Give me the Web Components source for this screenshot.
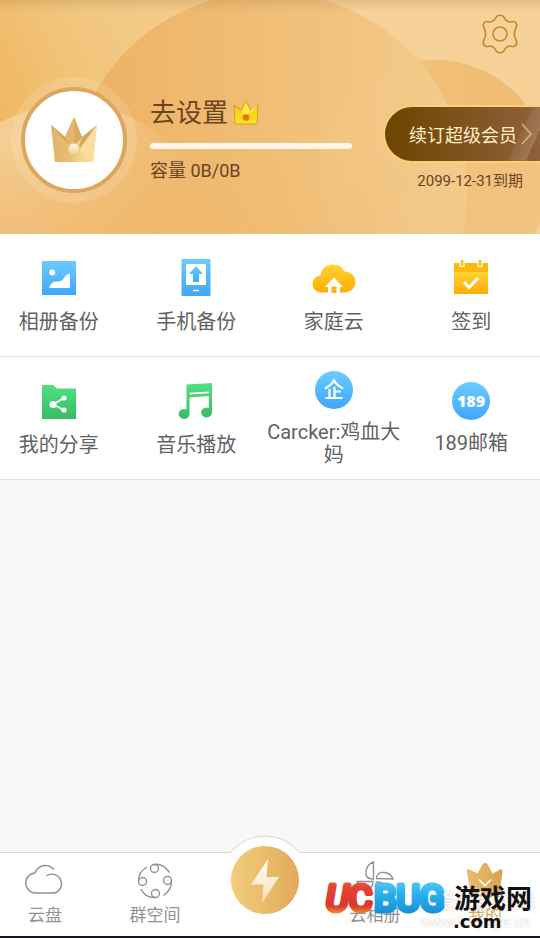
<!DOCTYPE html>
<html lang="zh-CN">
<head>
<meta charset="utf-8">
<meta name="viewport" content="width=device-width, initial-scale=1">
<title>我的</title>
<style>
html,body{margin:0;background:#f8f8f8}
body{font-family:Roboto,"Noto Sans CJK SC",sans-serif;color:#5f6265}
</style>
</head>
<body>
<my-page></my-page>
<script>
const ICONS = {
gear:[36,40,`<g fill="none" stroke="#c4862e" stroke-width="1.6" stroke-linejoin="round"><path d="M15 2.2Q18 .2 21 2.2C22.600 3.200 22.800 7.600 28 8Q32.600 6.600 33.600 8.600C37.200 12.500 32.400 13.500 32.400 20S37.200 27.500 33.600 31.400Q32.600 33.400 28 32C22.800 32.400 22.600 36.800 21 37.800Q18 39.800 15 37.800C13.400 36.800 13.200 32.400 8 32Q3.400 33.400 2.400 31.400C-1.200 27.500 3.600 26.500 3.600 20S-1.200 12.500 2.400 8.600Q3.400 6.600 8 8C13.200 7.600 13.400 3.200 15 2.200Z"/><circle cx="18" cy="20" r="7"/></g>`],
crown:[46,46,`<defs><linearGradient id="a" x1="0" y1=".5" x2="1" y2=".5"><stop stop-color="#e2b366"/><stop offset="1" stop-color="#ffe3a3"/></linearGradient><linearGradient id="c" x2="0" y2="1"><stop stop-color="#fff7e8"/><stop offset="1" stop-color="#f3ce8d"/></linearGradient></defs><path d="M0 8L14 20 23 0 31 20 46 8 42 45H4Z" fill="url(#a)"/><path d="M0 8L14 20 23 45H4Z" fill="#e0b46c" opacity=".45"/><path d="M23 0V30L14 24 15 17Z" fill="#dcae62" opacity=".6"/><path d="M23 0L31 20 23 30Z" fill="#d9ac5f"/><path d="M46 8L31 20 26 35Z" fill="#cfa95d"/><path d="M45.500 11L28 33 42 45Z" fill="#fbdd9e"/><path d="M0 8L14 20 18 28Z" fill="#cfa357"/><circle cx="23" cy="32" r="5.800" fill="url(#c)" stroke="#eac37d" stroke-width=".8"/>`],
badge:[26,26,`<defs><linearGradient id="a" x2="0" y2="1"><stop stop-color="#f6bd13"/><stop offset="1" stop-color="#ffe81c"/></linearGradient></defs><path d="M1 5L8 10 13 1 18 10 25 5 24 24H2Z" fill="url(#a)" stroke="#d79b2d"/><path d="M13 2L17 11 13 17 9 11Z" fill="#ffed4a"/><path d="M25 5L17 14 18 10Z" fill="#fff15b"/><circle cx="13" cy="17.500" r="3.300" fill="#e9730c"/>`],
photo:[42,42,`<rect x="4" y="4" width="34" height="34" fill="url(#blue)"/><circle cx="14.300" cy="15.500" r="2.900" fill="#fff"/><path d="M11 31Q13 24.500 18 24.500C28 25.500 24 18 32 16.500V31Z" fill="#fff"/>`],
phone:[42,42,`<rect x="6.500" y="2" width="29" height="37" fill="url(#blue)"/><path d="M11 7H31V28H11Z" fill="#fff"/><path d="M21 9L28 17H24V25H18V17H14Z" fill="url(#blue)"/><path d="M18 33.500H24" stroke="#fff" stroke-width="1.500"/>`],
home:[44,42,`<path d="M9.500 35.500A8.500 8.500 0 0 1 8.500 18.500C9 12 14 7.500 21 7.500Q29.500 7.500 32.500 14.500A10.500 10.500 0 0 1 33.500 35.500Z" fill="url(#gold)"/><path d="M22 20.500L13 30H16V36H28V30H31Z" fill="#fff"/><path d="M19.500 29.500H24.500V36H19.500Z" fill="#ffb50b"/>`],
sign:[42,42,`<path d="M4 6H38V15H4Z" fill="#fdb90b"/><path d="M4 15H38V37H4Z" fill="url(#gold)"/><path d="M10 2.500H14V9.500H10ZM28 2.500H32V9.500H28Z" fill="#fdbd18" stroke="#fff" stroke-width="1.200"/><path d="M14 25L19 30.500 28 21" fill="none" stroke="#fff" stroke-width="3"/>`],
share:[42,42,`<path d="M4 5H15L19 8.500H38V39H4Z" fill="url(#green)"/><path d="M26 18L15 24.500 26 30" fill="none" stroke="#fff" stroke-width="1.800"/><g fill="#fff"><circle cx="15" cy="24.500" r="3.500"/><circle cx="26" cy="18" r="2.600"/><circle cx="26" cy="30" r="2.600"/></g>`],
music:[42,42,`<path d="M11.500 4.500L37 3V32A5.500 5 0 1 1 34 28V16L14.500 17.500V33A5.500 5 0 1 1 11.500 29.500Z" fill="url(#green)"/><path d="M14.500 13.600L34 12.400" stroke="#fff" stroke-width="1.800"/>`],
firm:[38,38,`<circle cx="19" cy="19" r="19" fill="url(#blue)"/><g fill="none" stroke="#fff" stroke-width="2.200"><path d="M10 17.500Q16 14.500 19 9.500 22 14.500 28 17.500M10.500 27H27.500M14.500 18V27M19.500 16V27M19.500 20.500H26"/></g>`],
mail:[38,38,`<circle cx="19" cy="19" r="19" fill="url(#blue)"/><text x="19" y="25" text-anchor="middle" font-family="Open Sans" font-size="16" font-weight="800" fill="#fff">189</text>`],
cloud:[40,38,`<path d="M28.500 7A11 11 0 0 0 10 11A10 10 0 0 0 11.500 31H29.500A9.600 9.600 0 1 0 22 13.500" fill="none" stroke="#929292" stroke-width="1.400" stroke-linecap="round"/>`],
group:[40,38,`<g fill="none" stroke="#929292" stroke-width="1.400"><circle cx="19.500" cy="6.500" r="4"/><circle cx="32.500" cy="18.500" r="4"/><circle cx="20.500" cy="31.500" r="4"/><circle cx="7.500" cy="19.500" r="4"/><path d="M19 2.500Q28 1 34.500 10.500M36.500 17.500Q37.500 27 28.500 33.500M20.500 35.500Q10 36 6 27M3.500 19.500Q3 10 12 5"/></g>`],
bolt:[68,68,`<defs><linearGradient id="a"><stop stop-color="#f2cd7c"/><stop offset="1" stop-color="#e1aa59"/></linearGradient><linearGradient id="c" x2="0" y2="1"><stop stop-color="#fff"/><stop offset="1" stop-color="#f8ddb0"/></linearGradient></defs><circle cx="34" cy="34" r="34" fill="url(#a)"/><path d="M37 13L20 38.500H32.500L31 57 48 31H35.500Z" fill="url(#c)"/>`],
fan:[40,38,`<g fill="none" stroke="#929292" stroke-width="1.400"><path d="M18.500 17V0Q10 3 11 13 12 17 18.500 17ZM21.500 16.500Q21.500 9.500 30 10.500 36 11.500 38 17ZM18 19.500H2Q5 27 12 27 18 26 18 19.500ZM21.500 20V36Q29 32 28 23 27 19.500 21.500 20Z"/></g>`],
mine:[40,38,`<defs><linearGradient id="a"><stop stop-color="#e9bd70"/><stop offset="1" stop-color="#d7a350"/></linearGradient></defs><path d="M2 10Q1 7.500 3.500 7L12.500 11.500 18 1.500Q20 .5 22 1.500L27.500 11.500 36 7Q38 7.500 37.500 10L34 35H6Z" fill="url(#a)"/><path d="M14 17.500L20 23.500 26 17.500" fill="none" stroke="#fff" stroke-width="1.600"/>`]
};
const GRADS = `<defs><linearGradient id="blue" x2="0" y2="1"><stop stop-color="#6ccbff"/><stop offset="1" stop-color="#3fa6fb"/></linearGradient><linearGradient id="gold" x2="0" y2="1"><stop stop-color="#ffd435"/><stop offset="1" stop-color="#ffac04"/></linearGradient><linearGradient id="green" x2="0" y2="1"><stop stop-color="#50e082"/><stop offset="1" stop-color="#38bb64"/></linearGradient></defs>`;
function define(tag, html){
  customElements.define(tag, class extends HTMLElement{
    constructor(){ super(); this.attachShadow({mode:"open"}).innerHTML = html; }
  });
}
customElements.define("app-icon", class extends HTMLElement{
  connectedCallback(){
    const [w,h,body] = ICONS[this.getAttribute("name")];
    const root = this.shadowRoot || this.attachShadow({mode:"open"});
    root.innerHTML = `<style>:host{display:block;flex:none}svg{display:block;overflow:visible}</style><svg width="${w}" height="${h}" viewBox="0 0 ${w} ${h}" aria-hidden="true">${GRADS}${body}</svg>`;
  }
});

define("profile-header", `<style>
:host{display:block;position:relative;overflow:hidden;background:#f2c37b;color:#6b4423}
.bg{position:absolute;inset:0;width:100%;height:100%}
.tools{position:relative;display:flex;justify-content:flex-end;padding:14px 22px 23px}
button{font:inherit;color:inherit;border:0;background:none;padding:0;cursor:pointer}
.row{position:relative;display:flex;align-items:flex-start;padding:0 0 31px 11px}
.halo{flex:none;padding:10px;border-radius:50%;background:#ffffff22}
.avatar{display:grid;place-items:center;box-sizing:border-box;width:106px;height:106px;border:4px solid #dba75c;border-radius:50%;background:#fff}
.info{flex:1;min-width:0;padding:18px 31px 0 13px}
.name{display:flex;align-items:center;gap:5px;font-size:26px;line-height:36px;font-weight:400;margin:0}
progress{appearance:none;display:block;width:100%;height:6px;margin:12px 0 9px;border:0;border-radius:3px;overflow:hidden;background:#fff6ea}
progress::-webkit-progress-bar{background:#fff6ea}
progress::-webkit-progress-value{background:#dba75c}
label{display:block;font-size:18px;line-height:26px}
.vip{flex:none;padding-top:28px}
.pill{display:flex;align-items:center;gap:4px;box-sizing:border-box;height:58px;padding:0 7px 0 24px;border:2px solid #fbd078;border-right:0;border-radius:29px 0 0 29px;background:linear-gradient(115deg,transparent 82%,#ffffff10 82%,#ffffff28 92%,transparent 92%),linear-gradient(90deg,#6f4300,#90613a);color:#fff0ca;font-size:18px}
.date{margin:6px 17px 0 0;text-align:right;font-size:15px;line-height:24px}
</style>
<svg class="bg" viewBox="0 0 540 234" preserveAspectRatio="none" aria-hidden="true"><defs>
<linearGradient id="b" gradientUnits="userSpaceOnUse" x1="0" y1="110" x2="330" y2="-40"><stop stop-color="#efb863"/><stop offset=".3" stop-color="#f2c67f"/><stop offset="1" stop-color="#f6d298"/></linearGradient>
<linearGradient id="m"><stop stop-color="#ecb162"/><stop offset=".5" stop-color="#f0be77"/><stop offset="1" stop-color="#f4cb8c"/></linearGradient>
<linearGradient id="l" gradientUnits="userSpaceOnUse" x1="0" y1="120" x2="200" y2="200"><stop stop-color="#f5cd93"/><stop offset=".45" stop-color="#f2c481"/><stop offset="1" stop-color="#f0bb72" stop-opacity=".3"/></linearGradient>
<linearGradient id="r"><stop stop-color="#f2c27f" stop-opacity="0"/><stop offset=".5" stop-color="#f0bc72"/><stop offset="1" stop-color="#efb76b"/></linearGradient>
<linearGradient id="f" x2="1" y2="0"><stop stop-color="#efb76b" stop-opacity=".6"/><stop offset=".5" stop-color="#efb76b" stop-opacity=".3"/><stop offset="1" stop-color="#efb76b" stop-opacity="0"/></linearGradient>
<linearGradient id="g" gradientUnits="userSpaceOnUse" x1="0" y1="150" x2="0" y2="234"><stop stop-color="#fff" stop-opacity="0"/><stop offset="1" stop-color="#fff"/></linearGradient><mask id="k"><path d="M0 130H540V234H0Z" fill="url(#g)"/></mask>
<linearGradient id="e" gradientUnits="userSpaceOnUse" x1="380" y1="170" x2="540" y2="200"><stop stop-color="#f4cc90" stop-opacity=".2"/><stop offset="1" stop-color="#f4cb8e" stop-opacity=".5"/></linearGradient>
<linearGradient id="t" x2="0" y2="1"><stop stop-color="#8a6840" stop-opacity=".18"/><stop offset="1" stop-color="#8a6840" stop-opacity="0"/></linearGradient></defs>
<path d="M0 0H540V234H0Z" fill="url(#b)"/>
<circle cx="435" cy="175" r="115" fill="url(#r)"/><circle cx="268" cy="191" r="199" fill="url(#m)"/>
<circle cx="435" cy="175" r="115" fill="#f5cf95" opacity=".15"/><circle cx="70" cy="255" r="150" fill="url(#l)"/><circle cx="520" cy="290" r="150" fill="url(#e)"/>
<path d="M0 130H540V234H0Z" fill="url(#f)" mask="url(#k)"/><path d="M0 0H540V12H0Z" fill="url(#t)"/></svg>
<div class="tools"><button aria-label="设置"><app-icon name="gear"></app-icon></button></div>
<div class="row"><div class="halo"><div class="avatar"><app-icon name="crown"></app-icon></div></div>
<div class="info"><h1 class="name">去设置<app-icon name="badge"></app-icon></h1><progress id="cap" value="0" max="1"></progress><label for="cap">容量 0B/0B</label></div>
<div class="vip"><button class="pill">续订超级会员<svg width="12" height="22" viewBox="0 0 12 22" aria-hidden="true"><path d="M1 1L10 11 1 21" fill="none" stroke="#d9b882" stroke-width="1.400"/></svg></button><div class="date">2099-12-31到期</div></div></div>`);

define("tile-row", `<style>:host{display:block;background:#fff;border-bottom:1px solid #e4e4e6;overflow:hidden}
div{display:grid;grid-template-columns:repeat(4,1fr);min-height:122px;margin-left:-10px}</style><div><slot></slot></div>`);

customElements.define("app-tile", class extends HTMLElement{
  connectedCallback(){
    const root = this.shadowRoot || this.attachShadow({mode:"open"});
    root.innerHTML = `<style>:host{display:grid;min-width:0}
button{display:flex;flex-direction:column;align-items:center;justify-content:center;gap:12px;padding:1px 0 0;border:0;background:none;font:inherit;font-size:20px;line-height:23px;color:inherit;cursor:pointer}</style>
<button><app-icon name="${this.getAttribute("icon")}"></app-icon><span><slot></slot></span></button>`;
  }
});
customElements.define("nav-item", class extends HTMLElement{
  connectedCallback(){
    const root = this.shadowRoot || this.attachShadow({mode:"open"});
    root.innerHTML = `<style>:host{display:block;color:#929292}:host([active]){color:#d9a54f}
a{display:flex;flex-direction:column;align-items:center;gap:3px;padding-top:9px;color:inherit;text-decoration:none;font-size:17px;line-height:24px}</style>
<a href="#${this.getAttribute("icon")}"><app-icon name="${this.getAttribute("icon")}"></app-icon><slot></slot></a>`;
  }
});
define("nav-action", `<style>:host{display:flex;justify-content:center;align-items:flex-start;position:relative}
.bump{position:absolute;bottom:100%;left:50%;margin:0 0 -1px -36px}
button{position:relative;margin-top:-7px;padding:0;border:0;background:none;cursor:pointer}</style>
<svg class="bump" width="72" height="19" viewBox="0 0 72 19" aria-hidden="true"><path d="M0 17.500Q2 17.500 4 15Q17 1 36 1T68 15Q70 17.500 72 17.500V19H0Z" fill="#fff"/><path d="M0 17.500Q2 17.500 4 15Q17 1 36 1T68 15Q70 17.500 72 17.500" fill="none" stroke="#d6d6d6"/></svg>
<button aria-label="快捷操作"><app-icon name="bolt"></app-icon></button>`);

define("site-mark", `<style>:host{position:absolute;right:0;bottom:0;width:220px;height:60px;pointer-events:none;white-space:nowrap}
span,svg{position:absolute}
.pale{color:#fff;text-shadow:0 0 3px #c4c4c4}
.forum{left:96px;top:14px;font-size:20px;line-height:24px}
.url{left:100px;top:35px;font:15px/20px "Open Sans",sans-serif}
.brand{left:0;top:0;font:400 36px Roboto,sans-serif;overflow:visible}
.cn{left:134px;top:6px;font-size:26px;line-height:34px;font-weight:700;color:#111}
.com{left:133px;top:35px;font:700 18px/22px "DejaVu Sans",sans-serif;color:#111}
</style><span class="pale forum">吾爱破解论坛</span><span class="pale url">www.52pojie.cn</span>
<svg class="brand" width="132" height="46" viewBox="0 0 132 46"><defs>
<linearGradient id="red" gradientUnits="userSpaceOnUse" x1="0" y1="5" x2="0" y2="38"><stop stop-color="#e8622f"/><stop offset=".2" stop-color="#e2403a"/><stop offset=".75" stop-color="#dc382c"/><stop offset="1" stop-color="#f0922c"/></linearGradient>
<linearGradient id="blu" gradientUnits="userSpaceOnUse" x1="0" y1="5" x2="0" y2="38"><stop stop-color="#52c8f6"/><stop offset=".4" stop-color="#28b0ec"/><stop offset="1" stop-color="#168fd8"/></linearGradient></defs>
<g stroke-linejoin="round" stroke-linecap="round" stroke-width="5"><text x="6" y="35" fill="url(#red)" stroke="url(#red)"><tspan font-style="italic">U</tspan>C</text><text x="54" y="35" fill="url(#blu)" stroke="url(#blu)">BUG</text></g></svg>
<span class="cn">游戏网</span><span class="com">.com</span>`);

define("tab-bar", `<style>:host{display:block;position:relative;background:#fff;border-top:1px solid #d6d6d6;border-bottom:2px solid #15151f}
nav{display:grid;grid-template-columns:repeat(5,1fr);min-height:83px;margin:0 0 0 -10px}</style><nav><slot></slot></nav><site-mark></site-mark>`);

define("my-page", `<style>:host{display:flex;flex-direction:column;min-height:100vh}main{flex:1}</style>
<profile-header></profile-header>
<main><tile-row><app-tile icon="photo">相册备份</app-tile><app-tile icon="phone">手机备份</app-tile><app-tile icon="home">家庭云</app-tile><app-tile icon="sign">签到</app-tile></tile-row>
<tile-row><app-tile icon="share">我的分享</app-tile><app-tile icon="music">音乐播放</app-tile><app-tile icon="firm">Carcker:鸡血大妈</app-tile><app-tile icon="mail">189邮箱</app-tile></tile-row></main>
<tab-bar><nav-item icon="cloud">云盘</nav-item><nav-item icon="group">群空间</nav-item><nav-action></nav-action><nav-item icon="fan">云相册</nav-item><nav-item icon="mine" active>我的</nav-item></tab-bar>`);
</script>
</body>
</html>
